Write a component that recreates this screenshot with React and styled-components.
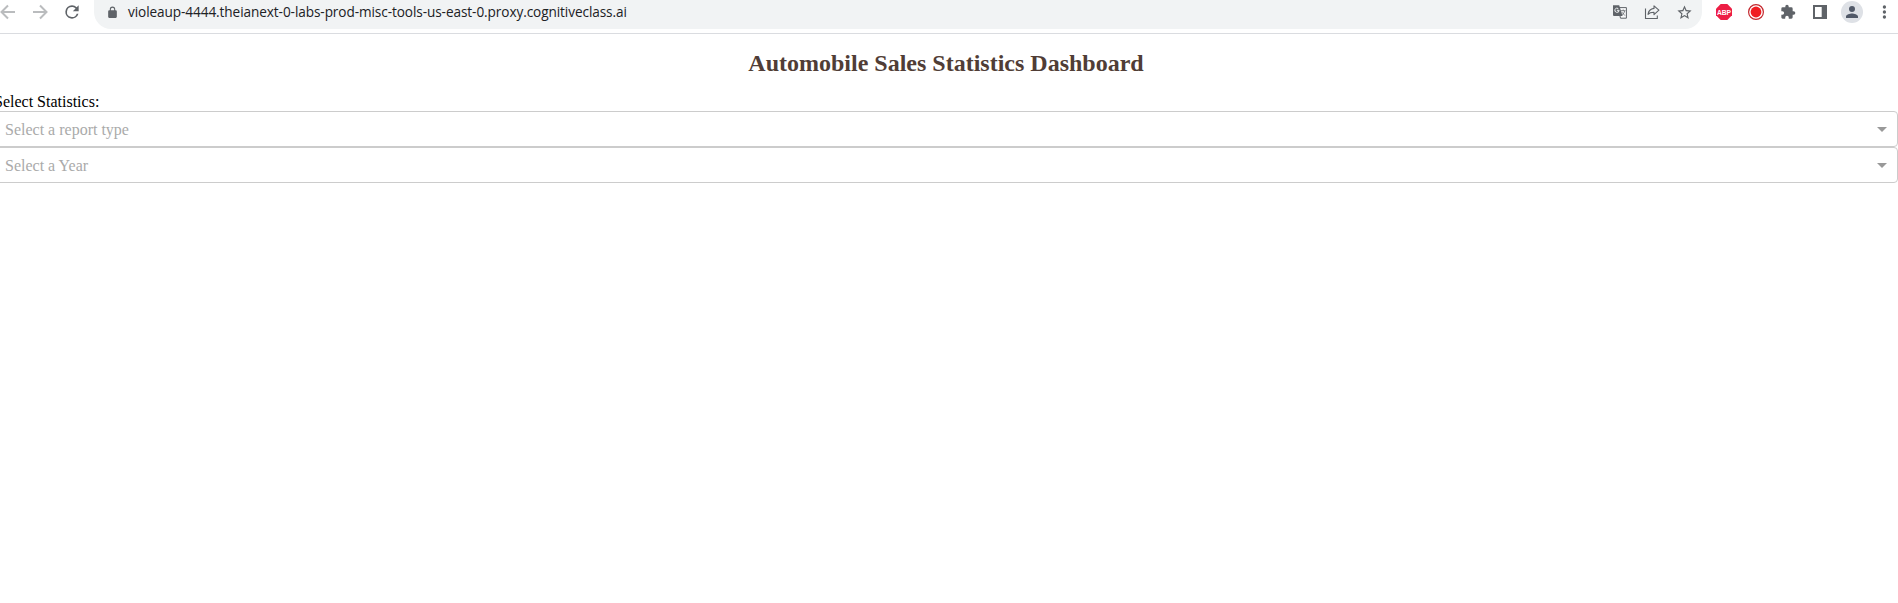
import React from 'react';
import styled, { createGlobalStyle } from 'styled-components';

const GlobalStyle = createGlobalStyle`
  body {
    margin: 0;
    background: #fff;
    overflow: hidden;
  }
`;

const Window = styled.div`
  height: 603px;
  overflow: hidden;
`;

const Toolbar = styled.header`
  box-sizing: border-box;
  display: flex;
  align-items: flex-start;
  height: 34px;
  margin: 0 -2px 0 -8px;
  border-bottom: 1px solid #dadce0;
  overflow: hidden;
`;

const IconCell = styled.span`
  display: flex;
  flex: none;
  align-items: center;
  justify-content: center;
  width: 32px;
  height: 24px;
  color: ${({ $muted }) => ($muted ? '#babcbe' : '#5f6368')};

  svg {
    display: block;
  }
`;

const AddressBar = styled.div`
  display: flex;
  flex: 1;
  align-items: center;
  height: 24px;
  margin: 0 6px 0 6px;
  padding: 0 2px 5px 2px;
  background: #f1f3f4;
  border-radius: 0 0 17px 17px;
`;

const Url = styled.span`
  flex: 1;
  font: 13.6px/24px 'Open Sans', 'Noto Sans', sans-serif;
  letter-spacing: -0.08px;
  color: #202124;
  white-space: nowrap;
`;

const Avatar = styled.span`
  display: flex;
  align-items: center;
  justify-content: center;
  width: 22px;
  height: 22px;
  border-radius: 50%;
  background: #dee1e6;
  color: #515968;
`;

const Page = styled.main`
  font-family: 'Liberation Serif', 'Times New Roman', serif;
  margin-left: -6px;
`;

const Title = styled.h1`
  margin: 0;
  padding: 14px 0 15px;
  font-size: 24px;
  line-height: 30px;
  font-weight: bold;
  text-align: center;
  color: #503d36;
`;

const Label = styled.label`
  display: block;
  height: 18px;
  font-size: 16px;
  line-height: 18px;
  color: #000;
`;

const Select = styled.div`
  box-sizing: border-box;
  display: flex;
  align-items: center;
  justify-content: space-between;
  height: 36px;
  padding: 0 10px;
  border: 1px solid #ccc;
  border-radius: 4px;
  font-size: 16px;
  color: #aaa;
`;

const Placeholder = styled.span`
  padding-top: 1px;
`;

const Arrow = styled.span`
  border: 5px solid transparent;
  border-top-color: #999;
  border-bottom-width: 0;
`;

const Material = ({ size = 18, d }) => (
  <svg width={size} height={size} viewBox="0 0 24 24" fill="currentColor">
    <path d={d} />
  </svg>
);

const paths = {
  reload:
    'M17.65 6.35A7.96 7.96 0 0 0 12 4a8 8 0 1 0 7.73 10h-2.08A6 6 0 1 1 12 6c1.66 0 3.14.69 4.22 1.78L13 11h7V4z',
  lock: 'M18 8h-1V6A5 5 0 0 0 7 6v2H6a2 2 0 0 0-2 2v10c0 1.1.9 2 2 2h12a2 2 0 0 0 2-2V10a2 2 0 0 0-2-2zM9 6a3 3 0 0 1 6 0v2H9z',
  star: 'M22 9.24l-7.19-.62L12 2 9.19 8.63 2 9.24l5.46 4.73L5.82 21 12 17.27 18.18 21l-1.63-7.03zM12 15.4l-3.76 2.27 1-4.28-3.32-2.88 4.38-.38L12 6.1l1.71 4.04 4.38.38-3.32 2.88 1 4.28z',
  puzzle:
    'M20.5 11H19V7a2 2 0 0 0-2-2h-4V3.5a2.5 2.5 0 0 0-5 0V5H4a2 2 0 0 0-2 2v3.8h1.5a2.7 2.7 0 0 1 0 5.4H2V20c0 1.1.9 2 2 2h3.8v-1.5a2.7 2.7 0 0 1 5.4 0V22H17a2 2 0 0 0 2-2v-4h1.5a2.5 2.5 0 0 0 0-5z',
  person: 'M12 12a4 4 0 1 0 0-8 4 4 0 0 0 0 8zm0 2c-2.67 0-8 1.34-8 4v2h16v-2c0-2.66-5.33-4-8-4z',
  dots: 'M12.5 8a2 2 0 1 0 0-4 2 2 0 0 0 0 4zm0 2a2 2 0 1 0 0 4 2 2 0 0 0 0-4zm0 6a2 2 0 1 0 0 4 2 2 0 0 0 0-4z',
};

const Arrowhead = ({ flip }) => (
  <svg width="16" height="16" viewBox="0 0 16 16" fill="none" stroke="currentColor" strokeWidth="2">
    <path d={flip ? 'M1 8h13M8 1.5 14.5 8 8 14.5' : 'M15 8H2M8 1.5 1.5 8 8 14.5'} />
  </svg>
);

const Translate = () => (
  <svg width="16" height="16" viewBox="0 0 16 16">
    <path d="M6 3.6h8.4v10.6H8.5z" fill="#f8f9fa" stroke="#5f6368" />
    <path d="M1 1.3h6.2l3.4 10.8H2a1 1 0 0 1-1-1z" fill="#5f6368" />
    <path d="M4.9 6.3h2.2a2.1 2.1 0 1 1-.8-1.7" fill="none" stroke="#f1f3f4" />
    <path d="M8.9 6.7h4.6M11.2 5.5v1.2M12.6 6.9c-.3 1.8-1.2 3-2.4 4M9.9 8.2l3 3.4" fill="none" stroke="#5f6368" strokeWidth=".8" />
  </svg>
);

const Share = () => (
  <svg width="16" height="16" viewBox="0 0 16 16" fill="none" stroke="currentColor" strokeWidth="1.1">
    <path d="M1.5 4.5v10h11.8v-3" />
    <path d="M10 1.8l4.9 4.4L10 10.6V8.2c-2.8 0-4.8.6-6 2.2.5-3.4 2.4-5.6 6-6z" strokeLinejoin="round" />
  </svg>
);

const BlockerText = styled.text`
  font: bold 8px 'Liberation Sans', Arial, sans-serif;
  fill: #fff;
`;

const Blocker = () => (
  <svg width="16" height="16" viewBox="0 0 16 16">
    <path d="M4.7 0h6.6L16 4.7v6.6L11.3 16H4.7L0 11.3V4.7z" fill="#ed1e45" />
    <BlockerText x="0.9" y="10.9" textLength="14.2" lengthAdjust="spacingAndGlyphs">
      ABP
    </BlockerText>
  </svg>
);

const Recorder = () => (
  <svg width="16" height="16" viewBox="0 0 16 16">
    <circle cx="8" cy="8" r="7.4" fill="#fff" stroke="#c3272d" strokeWidth="1.2" />
    <circle cx="8" cy="8" r="5.4" fill="#f01d22" />
  </svg>
);

const SidePanel = () => (
  <svg width="14" height="14" viewBox="0 0 14 14">
    <path d="M0 0h14v14H0zM2 2v10h6.7V2z" fill="currentColor" fillRule="evenodd" />
  </svg>
);

const Dropdown = ({ placeholder }) => (
  <Select>
    <Placeholder>{placeholder}</Placeholder>
    <Arrow />
  </Select>
);

export default function App() {
  return (
    <Window>
      <GlobalStyle />
      <Toolbar>
        <IconCell $muted><Arrowhead /></IconCell>
        <IconCell $muted><Arrowhead flip /></IconCell>
        <IconCell><Material size={20} d={paths.reload} /></IconCell>
        <AddressBar>
          <IconCell><Material size={13} d={paths.lock} /></IconCell>
          <Url>violeaup-4444.theianext-0-labs-prod-misc-tools-us-east-0.proxy.cognitiveclass.ai</Url>
          <IconCell><Translate /></IconCell>
          <IconCell><Share /></IconCell>
          <IconCell><Material size={17} d={paths.star} /></IconCell>
        </AddressBar>
        <IconCell><Blocker /></IconCell>
        <IconCell><Recorder /></IconCell>
        <IconCell><Material size={16} d={paths.puzzle} /></IconCell>
        <IconCell><SidePanel /></IconCell>
        <IconCell><Avatar><Material size={18} d={paths.person} /></Avatar></IconCell>
        <IconCell><Material size={20} d={paths.dots} /></IconCell>
      </Toolbar>
      <Page>
        <Title>Automobile Sales Statistics Dashboard</Title>
        <Label>Select Statistics:</Label>
        <Dropdown placeholder="Select a report type" />
        <Dropdown placeholder="Select a Year" />
      </Page>
    </Window>
  );
}
